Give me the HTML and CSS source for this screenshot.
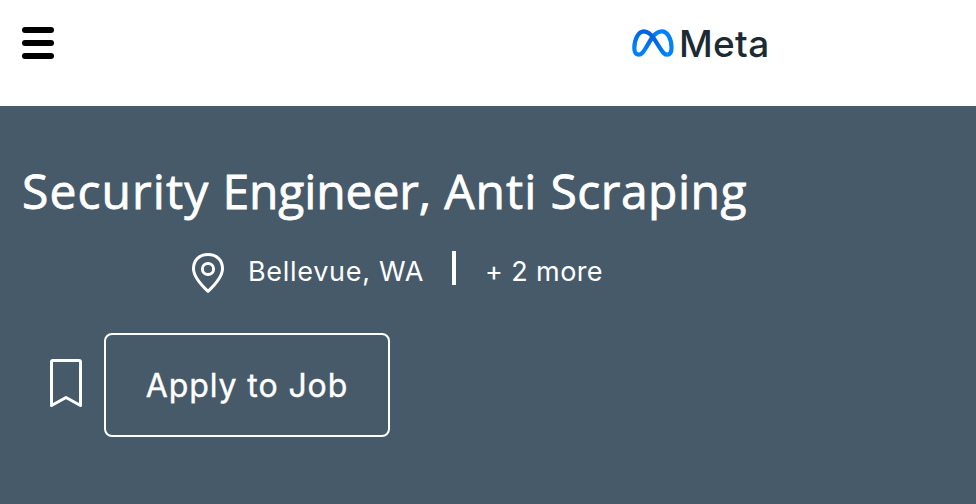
FILE: index.html
```html
<!DOCTYPE html>
<html lang="en">
<head>
<meta charset="utf-8">
<title>Security Engineer, Anti Scraping</title>
<link rel="stylesheet" href="styles.css">
</head>
<body>
<header class="header">
  <button class="menu" aria-label="Menu"><span class="menu-line"></span><span class="menu-line"></span><span class="menu-line"></span></button>
  <a class="brand">
    <svg class="brand-mark" width="42" height="28" viewBox="0 0 42 28" fill="none" stroke-width="4.2">
      <defs>
        <linearGradient id="left" x1="0" y1="1" x2="0.4" y2="0"><stop offset="0.3" stop-color="#0082fb"/><stop offset="1" stop-color="#0064e0"/></linearGradient>
        <linearGradient id="cross" x1="0" y1="0" x2="1" y2="1"><stop offset="0.4" stop-color="#0064e0"/><stop offset="1" stop-color="#0082fb"/></linearGradient>
      </defs>
      <path stroke="#0082fb" d="M20.500 8C23.500 4 26.500 2.300 29.800 2.300C35.600 2.300 39.500 10 39.500 18.500C39.500 23 38 25.700 35.200 25.700"/>
      <path stroke="url(#left)" d="M20.500 8C18.500 11 16.500 14.500 13.800 19C10.600 24.300 9.200 25.700 6.800 25.700C3.800 25.700 2.300 22.800 2.300 19C2.300 10.500 6.300 2.300 12 2.300"/>
      <path stroke="url(#cross)" d="M11.500 2.300C15.500 2.300 18.500 4.500 22 9.600L28 19.200C31.200 24.300 32.700 25.700 35.400 25.700"/>
    </svg>
    <span class="brand-name">Meta</span>
  </a>
</header>
<main class="hero">
  <h1 class="title"><span class="word-wide">Security</span> <span class="word-tight">Engineer,</span> <span class="word-wide">Anti</span> <span>Scraping</span></h1>
  <div class="locations">
    <svg class="pin" width="34" height="42" viewBox="0 0 34 42" fill="none" stroke="#fff" stroke-width="3">
      <path stroke-linejoin="round" d="M17 39.300C14 36.500 2.500 26 2.500 16.500C2.500 8 8.500 2.500 17 2.500S31.500 8 31.500 16.500C31.500 26 20 36.500 17 39.300Z"/>
      <circle cx="17" cy="17" r="5.600"/>
    </svg>
    <span class="place">Bellevue, WA</span>
    <span class="divider"></span>
    <span class="more">+ 2 more</span>
  </div>
  <div class="actions">
    <svg class="bookmark" width="34" height="50" viewBox="0 0 34 50" fill="none" stroke="#fff" stroke-width="3">
      <path stroke-linejoin="round" d="M4 2.500H30Q31.500 2.500 31.500 4V47.500L17 39.500L2.500 47.500V4Q2.500 2.500 4 2.500Z"/>
    </svg>
    <button class="apply">Apply to Job</button>
  </div>
</main>
</body>
</html>
```

FILE: styles.css
```css
* { box-sizing: border-box; }
body { margin: 0; background: #fff; font-family: Inter, "Open Sans", sans-serif; }
button { margin: 0; padding: 0; border: 0; background: none; font: inherit; }
.header { display: flex; align-items: flex-start; height: 106px; padding: 27px 0 0 22px; }
.menu { display: flex; flex-direction: column; gap: 7px; width: 32px; }
.menu-line { height: 6px; border-radius: 3px; background: #000; }
.brand { display: flex; margin: 2px 0 0 578px; }
.brand-name { margin-left: 5px; font-size: 37px; line-height: 29px; font-weight: 500; letter-spacing: 0.3px; color: #1c2b33; }
.hero { height: 398px; padding: 56px 0 0 22px; background: #475a69; color: #fff; }
.title { margin: 0; font-family: "Open Sans", sans-serif; font-size: 48px; font-weight: 400; line-height: 58px; letter-spacing: 0.5px; white-space: nowrap; -webkit-text-stroke: 0.8px #fff; }
.word-wide { letter-spacing: 1.1px; }
.word-tight { letter-spacing: -0.1px; }
.locations { display: flex; align-items: flex-start; height: 42px; margin: 32px 0 0 169px; font-size: 27px; line-height: 40px; white-space: nowrap; }
.place { margin-left: 23px; width: 180px; letter-spacing: 0.7px; }
.divider { width: 4px; height: 34px; margin: -1px 0 0 24px; background: #fff; }
.more { margin-left: 29px; letter-spacing: 0.4px; }
.actions { display: flex; align-items: center; margin: 39px 0 0 27px; }
.bookmark { margin-top: -4px; }
.apply { width: 286px; height: 104px; margin-left: 21px; border: 2px solid #fff; border-radius: 8px; color: #fff; font-size: 32px; font-weight: 400; letter-spacing: 0.9px; -webkit-text-stroke: 0.4px #fff; }
```
